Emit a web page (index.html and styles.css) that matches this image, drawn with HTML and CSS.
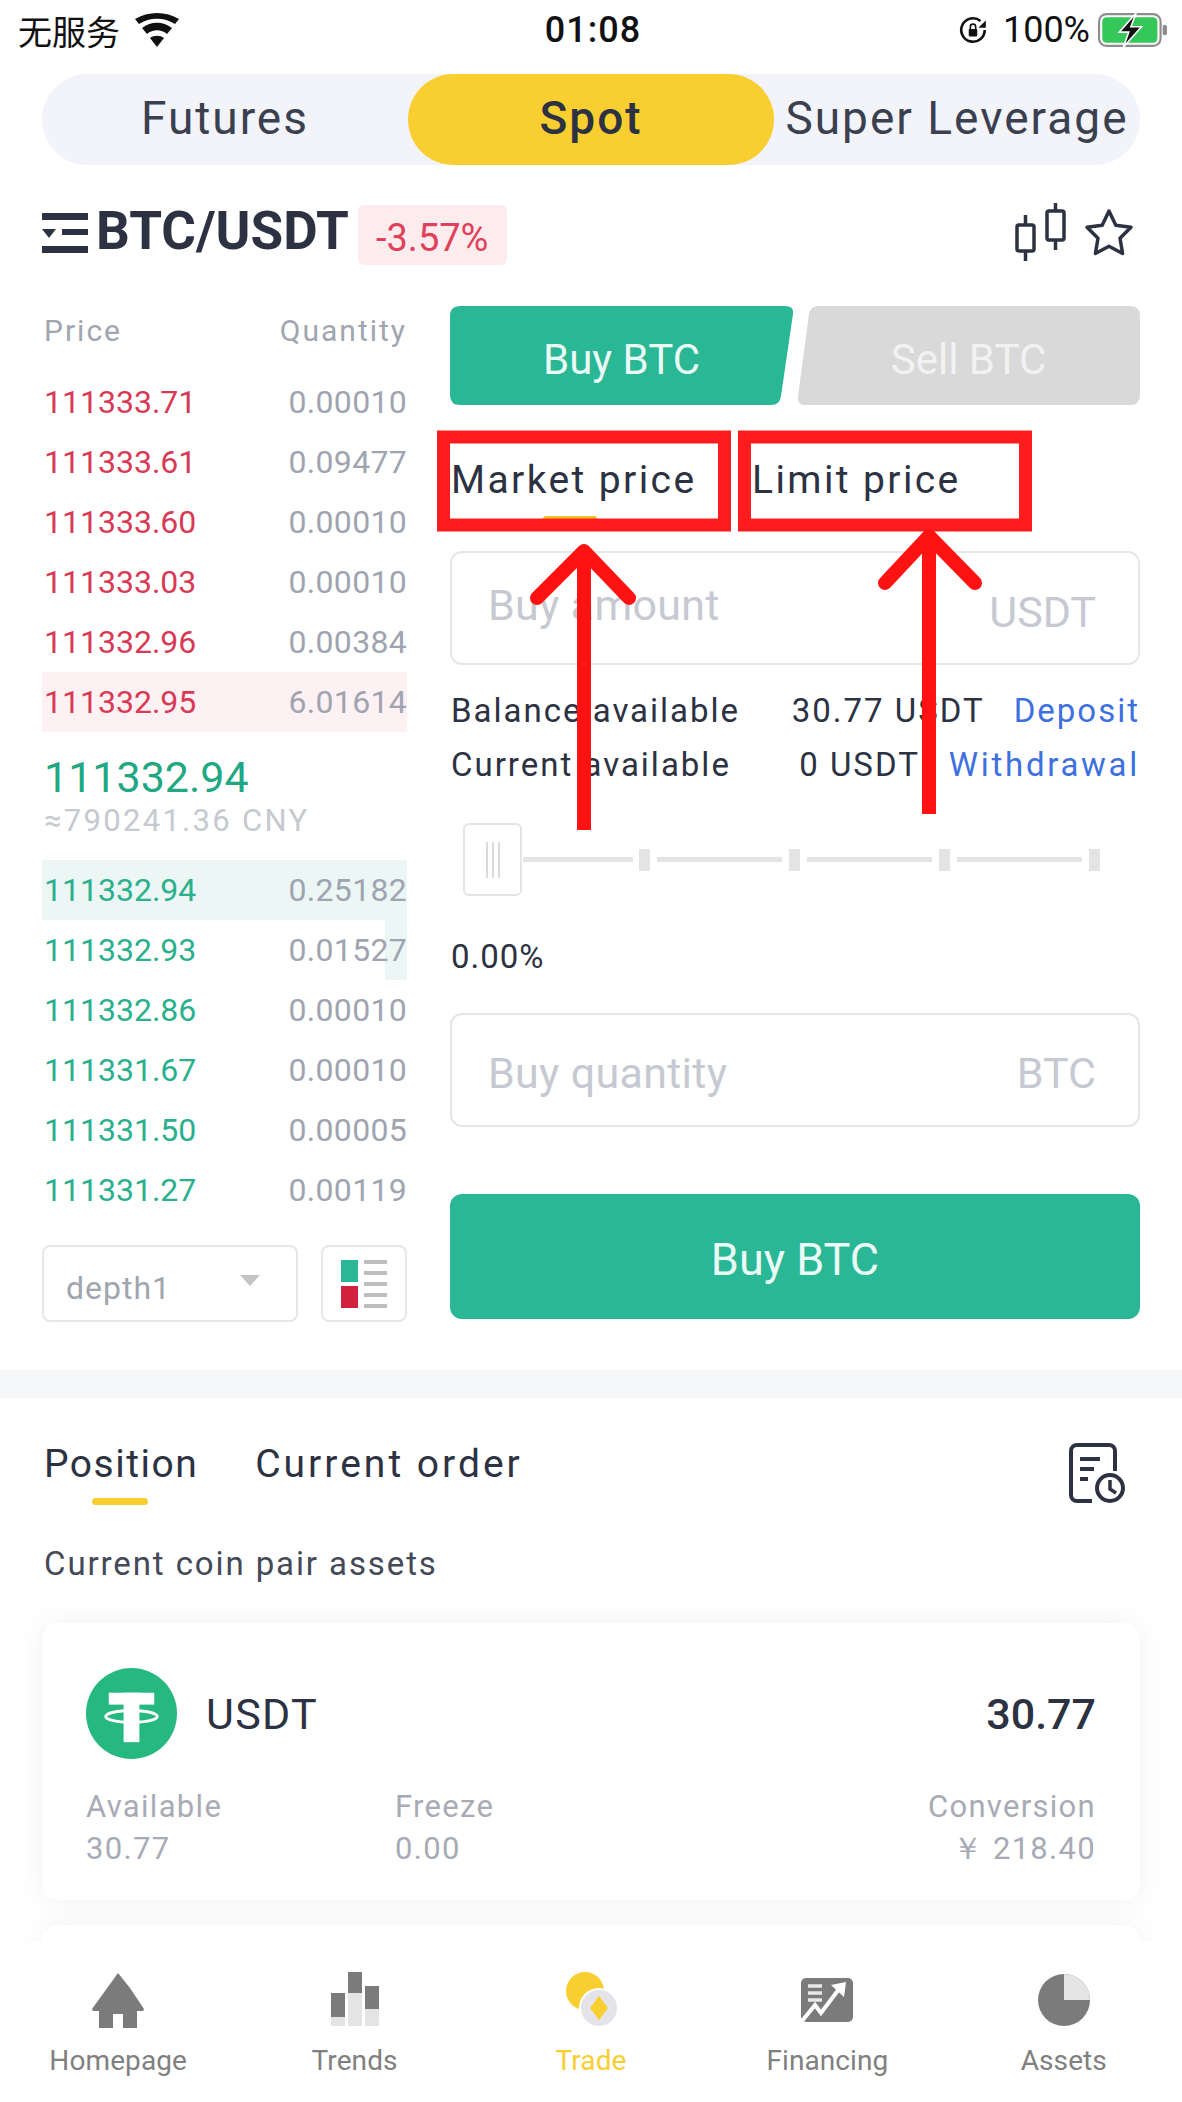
FILE: index.html
```html
<!DOCTYPE html>
<html lang="en">
<head>
  <meta charset="UTF-8">
  <meta name="viewport" content="width=device-width, initial-scale=1.0">
  <title>Spot Trade</title>
  <link rel="stylesheet" href="styles.css">
</head>
<body>
<div id="page">
  <!-- Status bar -->
  <div class="status-bar">
    <div class="status-left">
      <span class="carrier">无服务</span>
      <svg class="wifi" viewBox="0 0 44 34">
        <path d="M22 34l-7-9c4-3 10-3 14 0z"/>
        <path d="M12 21L7 15c9-7 21-7 30 0l-5 6c-6-5-14-5-20 0z"/>
        <path d="M4 11L0 6c13-8 31-8 44 0l-4 5C29 4 15 4 4 11z"/>
      </svg>
    </div>
    <span class="clock">01:08</span>
    <div class="status-right">
      <svg class="rotation" viewBox="0 0 30 30">
        <path d="M26 15a11 11 0 1 1-4-8.500" fill="none" stroke="#111" stroke-width="2.500"/>
        <path d="M27 6v7h-7z" fill="#111"/>
        <rect x="11" y="14" width="8" height="7" rx="1" fill="#111"/>
        <path d="M12.500 14v-2a2.500 2.500 0 0 1 5 0v2" fill="none" stroke="#111" stroke-width="1.500"/>
      </svg>
      <span class="battery-pct">100%</span>
      <svg class="battery" viewBox="0 0 66 32">
        <rect x="1" y="1" width="58" height="30" rx="7" fill="none" stroke="#8d8d8d" stroke-width="2"/>
        <rect x="4" y="4" width="52" height="24" rx="4" fill="#35c759"/>
        <rect x="61" y="11" width="4" height="10" rx="2" fill="#8d8d8d"/>
        <path d="M36 0L20 18h9l-5 14 17-19h-10z" fill="#111" stroke="#fff" stroke-width="1.500"/>
      </svg>
    </div>
  </div>

  <!-- Futures / Spot / Super Leverage -->
  <div class="segment">
    <div class="segment-item">Futures</div>
    <div class="segment-item active">Spot</div>
    <div class="segment-item">Super Leverage</div>
  </div>

  <!-- Pair header -->
  <div class="pair-header">
    <svg class="pair-menu" viewBox="0 0 46 40">
      <rect x="0" y="0" width="46" height="7"/>
      <path d="M0 16h14l-7 9z"/>
      <rect x="20" y="16" width="26" height="6"/>
      <rect x="0" y="33" width="46" height="7"/>
    </svg>
    <span class="pair-name">BTC/USDT</span>
    <span class="pair-change">-3.57%</span>
    <div class="pair-actions">
      <svg class="candle-icon" viewBox="0 0 54 58">
        <g fill="none" stroke="#2c3242" stroke-width="3.500">
          <rect x="3" y="22" width="17" height="26" rx="2"/>
          <path d="M11.500 12v10M11.500 48v10"/>
          <rect x="33" y="8" width="17" height="29" rx="2"/>
          <path d="M41.500 0v8M41.500 37v10"/>
        </g>
      </svg>
      <svg class="star-icon" viewBox="0 0 50 48">
        <path d="M25 3l6.800 14.200 15.200 2.100-11 11 2.600 15.200L25 38.300 11.400 45.500 14 30.300 3 19.300l15.200-2.100z" fill="none" stroke="#2c3242" stroke-width="3.500" stroke-linejoin="round"/>
      </svg>
    </div>
  </div>

  <!-- Order book and order form -->
  <div class="trade">
    <div class="book">
      <div class="book-head"><span>Price</span><span>Quantity</span></div>
      <div class="book-rows">
        <div class="row ask"><span>111333.71</span><span class="qty">0.00010</span></div>
        <div class="row ask"><span>111333.61</span><span class="qty">0.09477</span></div>
        <div class="row ask"><span>111333.60</span><span class="qty">0.00010</span></div>
        <div class="row ask"><span>111333.03</span><span class="qty">0.00010</span></div>
        <div class="row ask"><span>111332.96</span><span class="qty">0.00384</span></div>
        <div class="row ask row-full-ask"><span>111332.95</span><span class="qty">6.01614</span></div>
      </div>
      <div class="mid">
        <div class="mid-price">111332.94</div>
        <div class="mid-cny">≈790241.36 CNY</div>
      </div>
      <div class="book-rows">
        <div class="row bid row-full-bid"><span>111332.94</span><span class="qty">0.25182</span></div>
        <div class="row bid row-part-bid"><span>111332.93</span><span class="qty">0.01527</span></div>
        <div class="row bid"><span>111332.86</span><span class="qty">0.00010</span></div>
        <div class="row bid"><span>111331.67</span><span class="qty">0.00010</span></div>
        <div class="row bid"><span>111331.50</span><span class="qty">0.00005</span></div>
        <div class="row bid"><span>111331.27</span><span class="qty">0.00119</span></div>
      </div>
      <div class="book-foot">
        <div class="depth-select"><span>depth1</span><i class="caret"></i></div>
        <div class="depth-toggle">
          <svg viewBox="0 0 46 48">
            <rect x="0" y="0" width="17" height="22" fill="#2ab795"/>
            <rect x="0" y="26" width="17" height="22" fill="#d0213f"/>
            <g fill="#bdbdbd">
              <rect x="23" y="0" width="23" height="4"/>
              <rect x="23" y="11" width="23" height="4"/>
              <rect x="23" y="22" width="23" height="4"/>
              <rect x="23" y="33" width="23" height="4"/>
              <rect x="23" y="44" width="23" height="4"/>
            </g>
          </svg>
        </div>
      </div>
    </div>

    <div class="form">
      <div class="side-tabs">
        <div class="side-tab side-buy">Buy BTC</div>
        <div class="side-tab side-sell">Sell BTC</div>
      </div>
      <div class="price-tabs">
        <span class="price-tab active">Market price</span>
        <span class="price-tab">Limit price</span>
      </div>
      <div class="field field-amount">
        <span class="field-hint">Buy amount</span>
        <span class="field-unit">USDT</span>
      </div>
      <div class="balance">
        <div class="balance-row">
          <span class="balance-label">Balance available</span>
          <span class="balance-value">30.77 USDT</span>
          <span class="balance-link">Deposit</span>
        </div>
        <div class="balance-row">
          <span class="balance-label">Current available</span>
          <span class="balance-value">0 USDT</span>
          <span class="balance-link">Withdrawal</span>
        </div>
      </div>
      <div class="slider">
        <div class="slider-handle"><i></i><i></i><i></i></div>
        <div class="slider-line"></div><div class="slider-tick"></div>
        <div class="slider-line"></div><div class="slider-tick"></div>
        <div class="slider-line"></div><div class="slider-tick"></div>
        <div class="slider-line"></div><div class="slider-tick"></div>
      </div>
      <div class="percent">0.00%</div>
      <div class="field field-quantity">
        <span class="field-hint">Buy quantity</span>
        <span class="field-unit">BTC</span>
      </div>
      <div class="buy-btn">Buy BTC</div>
    </div>
  </div>

  <div class="divider"></div>

  <!-- Positions -->
  <div class="orders">
    <div class="orders-head">
      <span class="orders-tab active">Position</span>
      <span class="orders-tab">Current order</span>
      <svg class="history-icon" viewBox="0 0 58 62">
        <path d="M24 58H9a6 6 0 0 1-6-6V8a6 6 0 0 1 6-6h32a6 6 0 0 1 6 6v20" fill="none" stroke="#2c3242" stroke-width="4"/>
        <path d="M12 16h20M12 26h14M12 36h8" stroke="#2c3242" stroke-width="4" fill="none"/>
        <circle cx="42" cy="45" r="13" fill="#fff" stroke="#2c3242" stroke-width="4"/>
        <path d="M42 37v9l6 4" fill="none" stroke="#2c3242" stroke-width="3.500"/>
      </svg>
    </div>
    <div class="orders-caption">Current coin pair assets</div>

    <div class="asset-card">
      <div class="asset-top">
        <svg class="coin" viewBox="0 0 92 92">
          <circle cx="46" cy="46" r="46" fill="#26b97f"/>
          <rect x="23" y="25" width="46" height="12" fill="#fff"/>
          <rect x="38" y="25" width="16" height="50" fill="#fff"/>
          <ellipse cx="46" cy="49" rx="26" ry="6" fill="none" stroke="#fff" stroke-width="3"/>
        </svg>
        <span class="asset-name">USDT</span>
        <span class="asset-total">30.77</span>
      </div>
      <div class="asset-cols">
        <div class="asset-col"><div>Available</div><div>30.77</div></div>
        <div class="asset-col"><div>Freeze</div><div>0.00</div></div>
        <div class="asset-col asset-col-right"><div>Conversion</div><div>￥ 218.40</div></div>
      </div>
    </div>
    <div class="asset-card asset-card-next"></div>
  </div>

  <!-- Bottom navigation -->
  <div class="tabbar">
    <div class="tab">
      <svg viewBox="0 0 56 56">
        <path d="M28 1l12 15v-0l14 21-1 2h-6v17H33V42H23v14H9V39H3l-1-2z" fill="#7b7b7b"/>
      </svg>
      <span>Homepage</span>
    </div>
    <div class="tab">
      <svg viewBox="0 0 56 56">
        <rect x="4" y="21" width="14" height="24" fill="#7b7b7b"/>
        <rect x="4" y="45" width="14" height="9" fill="#e4e4e4"/>
        <rect x="21" y="0" width="14" height="21" fill="#7b7b7b"/>
        <rect x="21" y="21" width="14" height="33" fill="#e4e4e4"/>
        <rect x="38" y="14" width="14" height="23" fill="#7b7b7b"/>
        <rect x="38" y="37" width="14" height="17" fill="#e4e4e4"/>
      </svg>
      <span>Trends</span>
    </div>
    <div class="tab tab-active">
      <svg viewBox="0 0 56 56">
        <circle cx="22" cy="19" r="19" fill="#f8ce30"/>
        <circle cx="36" cy="36" r="20" fill="#fff"/>
        <circle cx="36" cy="36" r="18" fill="#e4e4e8"/>
        <path d="M36 24l9 12-9 12-9-12z" fill="#f8ce30"/>
      </svg>
      <span>Trade</span>
    </div>
    <div class="tab">
      <svg viewBox="0 0 56 56">
        <rect x="2" y="6" width="52" height="44" rx="5" fill="#7b7b7b"/>
        <path d="M9 14h14M9 21h14M9 28h14" stroke="#e8e8e8" stroke-width="3.500"/>
        <path d="M3 49l13-16 6 8 18-24" fill="none" stroke="#fff" stroke-width="4"/>
        <path d="M32 13l15-3-2 15z" fill="#fff"/>
      </svg>
      <span>Financing</span>
    </div>
    <div class="tab">
      <svg viewBox="0 0 56 56">
        <circle cx="28" cy="28" r="26" fill="#7b7b7b"/>
        <path d="M28 2a26 26 0 0 1 26 26H28z" fill="#e4e4e4"/>
      </svg>
      <span>Assets</span>
    </div>
  </div>

  <!-- Red annotations drawn on top of the screenshot -->
  <svg class="annotations" viewBox="0 0 1182 2102">
    <rect x="443.500" y="437" width="281" height="88" class="note-box"/>
    <rect x="744.500" y="437" width="281" height="88" class="note-box"/>
    <path d="M584 560V830" class="note-shaft"/>
    <path d="M537 598L584 551L629 598" class="note-head"/>
    <path d="M929 545V814" class="note-shaft"/>
    <path d="M885 583L929 536L975 583" class="note-head"/>
  </svg>
</div>
</body>
</html>
```

FILE: styles.css
```css
/* Page */
body {
  margin: 0;
  background-color: #fff;
  font-family: Roboto, "Noto Sans", sans-serif;
  color: #2c3242;
}

#page {
  position: relative;
  width: 1182px;
  height: 2102px;
  overflow: hidden;
  background-color: #fff;
}

/* Status bar */
.status-bar {
  height: 60px;
  padding: 0 14px 0 18px;
  display: grid;
  grid-template-columns: 1fr auto 1fr;
  align-items: center;
  color: #111;
}

.status-left, .status-right {
  display: flex;
  align-items: center;
}

.status-right {
  justify-content: flex-end;
}

.carrier {
  font-family: "Noto Sans CJK SC", sans-serif;
  font-size: 34px;
}

.wifi {
  width: 46px;
  height: 34px;
  margin-left: 14px;
  fill: #111;
}

.clock {
  font-size: 36px;
  font-weight: 500;
  letter-spacing: 1px;
}

.rotation {
  width: 32px;
  height: 32px;
  margin-right: 14px;
}

.battery-pct {
  font-size: 36px;
  margin-right: 8px;
}

.battery {
  width: 70px;
  height: 34px;
}

/* Futures / Spot tabs */
.segment {
  margin: 14px 42px 0;
  height: 91px;
  display: grid;
  grid-template-columns: repeat(3, 1fr);
  align-items: center;
  background-color: #f2f4f9;
  border-radius: 46px;
}

.segment-item {
  height: 91px;
  line-height: 89px;
  text-align: center;
  font-size: 46px;
  letter-spacing: 2px;
  white-space: nowrap;
  color: #3a4050;
}

.segment-item.active {
  background-color: #f8ce30;
  border-radius: 46px;
  font-weight: 500;
  color: #2c3242;
}

/* Pair header */
.pair-header {
  margin-top: 40px;
  padding: 0 42px 0 42px;
  height: 60px;
  display: flex;
  align-items: center;
}

.pair-menu {
  width: 46px;
  height: 40px;
  fill: #2c3242;
  margin-right: 8px;
  margin-top: -4px;
}

.pair-name {
  font-size: 53px;
  font-weight: 700;
  line-height: 52px;
  margin-bottom: 8px;
  color: #2c3242;
}

.pair-change {
  margin-left: 9px;
  width: 149px;
  height: 60px;
  line-height: 66px;
  text-align: center;
  background-color: #fcecee;
  border-radius: 6px;
  color: #e0405a;
  font-size: 38px;
}

.pair-actions {
  margin-left: auto;
  display: flex;
  align-items: center;
  padding-right: 6px;
  margin-top: -6px;
}

.candle-icon {
  width: 54px;
  height: 58px;
}

.star-icon {
  width: 50px;
  height: 48px;
  margin-left: 16px;
}

/* Layout of the trade area */
.trade {
  margin-top: 41px;
  padding: 0 42px 48px;
  display: grid;
  grid-template-columns: 365px 690px;
  column-gap: 43px;
}

/* Order book */
.book-head {
  height: 48px;
  margin-bottom: 18px;
  display: flex;
  justify-content: space-between;
  align-items: center;
  font-size: 30px;
  letter-spacing: 2px;
  color: #a0a5b0;
  padding-left: 2px;
}

.book-rows {
  display: flex;
  flex-direction: column;
}

.row {
  height: 60px;
  padding-left: 2px;
  display: flex;
  justify-content: space-between;
  align-items: center;
  font-size: 32px;
}

.row .qty {
  color: #9fa4b0;
  letter-spacing: 0.3px;
}

.ask {
  color: #d83a55;
}

.bid {
  color: #2ab08c;
}

.row-full-ask {
  background-color: #fdf1f3;
}

.row-full-bid {
  background-color: #ebf6f5;
}

.row-part-bid {
  background: linear-gradient(to right, transparent 343px, #ebf6f5 343px);
}

.mid {
  height: 128px;
  padding: 21px 0 0 2px;
  box-sizing: border-box;
}

.mid-price {
  font-size: 43px;
  line-height: 48px;
  color: #1fa883;
}

.mid-cny {
  font-size: 31px;
  line-height: 39px;
  letter-spacing: 2.3px;
  color: #c6c9d0;
}

.book-foot {
  margin-top: 25px;
  display: grid;
  grid-template-columns: 256px 86px;
  justify-content: space-between;
}

.depth-select, .depth-toggle {
  height: 77px;
  box-sizing: border-box;
  border: 2px solid #e6e7ea;
  border-radius: 8px;
  display: flex;
  align-items: center;
}

.depth-select {
  padding: 8px 36px 0 22px;
  justify-content: space-between;
  font-size: 32px;
  letter-spacing: 1px;
  color: #a0a5b0;
}

.caret {
  width: 0;
  height: 0;
  border-left: 10px solid transparent;
  border-right: 10px solid transparent;
  border-top: 11px solid #c4c4c4;
  margin-top: -14px;
}

.depth-toggle {
  justify-content: center;
}

.depth-toggle svg {
  width: 46px;
  height: 48px;
}

/* Order form */
.side-tabs {
  display: grid;
  grid-template-columns: 343px 343px;
  column-gap: 4px;
}

.side-tab {
  height: 99px;
  line-height: 107px;
  text-align: center;
  font-size: 42px;
}

.side-buy {
  background-color: #2ab795;
  color: #eafaf5;
  clip-path: path("M10 0H335Q344 0 343 8L331 90Q330 99 321 99H10Q0 99 0 89V10Q0 0 10 0Z");
}

.side-sell {
  background-color: #d9d9d9;
  color: #f2f2f2;
  clip-path: path("M22 0H333Q343 0 343 10V89Q343 99 333 99H8Q0 99 1 90L12 8Q13 0 22 0Z");
}

.price-tabs {
  height: 146px;
  padding: 0 0 0 1px;
  display: flex;
  box-sizing: border-box;
}

.price-tab {
  position: relative;
  width: 301px;
  padding-top: 52px;
  line-height: 46px;
  font-size: 39px;
  letter-spacing: 2.4px;
  color: #2c3242;
}

.price-tab.active::after {
  content: "";
  position: absolute;
  left: 92px;
  top: 111px;
  width: 54px;
  height: 6px;
  background-color: #f0c22a;
  border-radius: 3px;
}

.field {
  height: 114px;
  box-sizing: border-box;
  border: 2px solid #e4e6ea;
  border-radius: 12px;
  padding: 0 42px 0 36px;
  display: flex;
  justify-content: space-between;
  align-items: center;
  font-size: 43px;
  color: #c6c9d1;
}

.field-amount .field-hint {
  margin-top: -6px;
}

.field-amount .field-unit {
  margin-top: 8px;
}

.field-quantity {
  margin-top: 36px;
  padding-top: 6px;
}

.field-hint {
  letter-spacing: 0.3px;
}

.balance {
  margin-top: 18px;
}

.balance-row {
  height: 54px;
  display: grid;
  grid-template-columns: 1fr auto auto;
  align-items: center;
  font-size: 33px;
  letter-spacing: 2px;
  padding-left: 1px;
  white-space: nowrap;
}

.balance-label {
  color: #2c3242;
}

.balance-value {
  color: #2c3242;
  margin-right: 29px;
}

.balance-link {
  color: #3e70e0;
}

.balance-row + .balance-row .balance-link {
  letter-spacing: 2.7px;
}

.slider {
  margin-top: 32px;
  height: 73px;
  padding-left: 13px;
  display: flex;
  align-items: center;
}

.slider-handle {
  width: 59px;
  height: 73px;
  box-sizing: border-box;
  border: 2px solid #e4e4e4;
  border-radius: 6px;
  display: flex;
  justify-content: center;
  align-items: center;
  gap: 4px;
}

.slider-handle i {
  width: 2px;
  height: 36px;
  background-color: #dadada;
}

.slider-line {
  width: 125px;
  height: 5px;
  margin: 0 7px;
  background-color: #e4e4e4;
}

.slider-handle + .slider-line {
  width: 110px;
  margin: 0 6px 0 1px;
}

.slider-tick {
  width: 11px;
  height: 22px;
  background-color: #e4e4e4;
}

.percent {
  margin-top: 41px;
  height: 40px;
  line-height: 40px;
  font-size: 33px;
  letter-spacing: 1px;
  padding-left: 1px;
  color: #2c3242;
}

.buy-btn {
  margin-top: 67px;
  height: 125px;
  line-height: 131px;
  text-align: center;
  background-color: #2ab795;
  border-radius: 12px;
  color: #eafaf5;
  font-size: 45px;
}

.divider {
  height: 28px;
  background-color: #f5f6f8;
}

/* Positions */
.orders {
  padding: 0 42px;
}

.orders-head {
  height: 67px;
  padding-top: 43px;
  display: flex;
  align-items: flex-start;
}

.orders-tab {
  position: relative;
  margin-left: 2px;
  margin-right: 55px;
  font-size: 39px;
  line-height: 46px;
  letter-spacing: 1.5px;
  color: #2c3242;
}

.orders-tab + .orders-tab {
  letter-spacing: 3px;
}

.orders-tab.active::after {
  content: "";
  position: absolute;
  left: 48px;
  top: 57px;
  width: 56px;
  height: 7px;
  background-color: #f8ce30;
  border-radius: 4px;
}

.history-icon {
  margin-left: auto;
  margin-top: 2px;
  margin-right: 14px;
  width: 58px;
  height: 62px;
}

.orders-caption {
  margin-top: 36px;
  padding-left: 2px;
  line-height: 40px;
  font-size: 33px;
  letter-spacing: 1.9px;
  color: #444a58;
}

.asset-card {
  margin-top: 39px;
  height: 277px;
  box-sizing: border-box;
  padding: 45px 44px 0;
  border-radius: 16px;
  background-color: #fff;
  box-shadow: 0 0 30px rgba(0, 0, 0, 0.06);
}

.asset-card-next {
  margin-top: 25px;
}

.asset-top {
  display: flex;
  align-items: center;
}

.coin {
  width: 91px;
  height: 91px;
  margin-right: 29px;
}

.asset-name {
  font-size: 43px;
  letter-spacing: 1.3px;
  color: #2c3242;
}

.asset-total {
  margin-left: auto;
  font-size: 43px;
  font-weight: 500;
  color: #2c3242;
}

.asset-cols {
  margin-top: 27px;
  display: grid;
  grid-template-columns: 309px 1fr 1fr;
  font-size: 31px;
  line-height: 42px;
  letter-spacing: 1.3px;
  color: #a8abb5;
}

.asset-col-right {
  text-align: right;
}

/* Bottom navigation */
.tabbar {
  position: absolute;
  left: 0;
  right: 0;
  bottom: 0;
  height: 160px;
  display: grid;
  grid-template-columns: repeat(5, 1fr);
  background-color: #fff;
}

.tab {
  display: flex;
  flex-direction: column;
  align-items: center;
  padding-top: 30px;
  font-size: 28px;
  letter-spacing: 0.1px;
  color: #808080;
}

.tab svg {
  width: 56px;
  height: 56px;
  margin-bottom: 16px;
}

.tab-active {
  color: #f8ce30;
}

/* Annotations */
.annotations {
  position: absolute;
  top: 0;
  left: 0;
  width: 1182px;
  height: 2102px;
  pointer-events: none;
}

.note-box {
  fill: none;
  stroke: #fe1c1f;
  stroke-width: 13;
}

.note-shaft {
  fill: none;
  stroke: #fe1212;
  stroke-width: 14;
}

.note-head {
  fill: none;
  stroke: #fe1212;
  stroke-width: 14;
  stroke-linecap: round;
  stroke-linejoin: round;
}
```
